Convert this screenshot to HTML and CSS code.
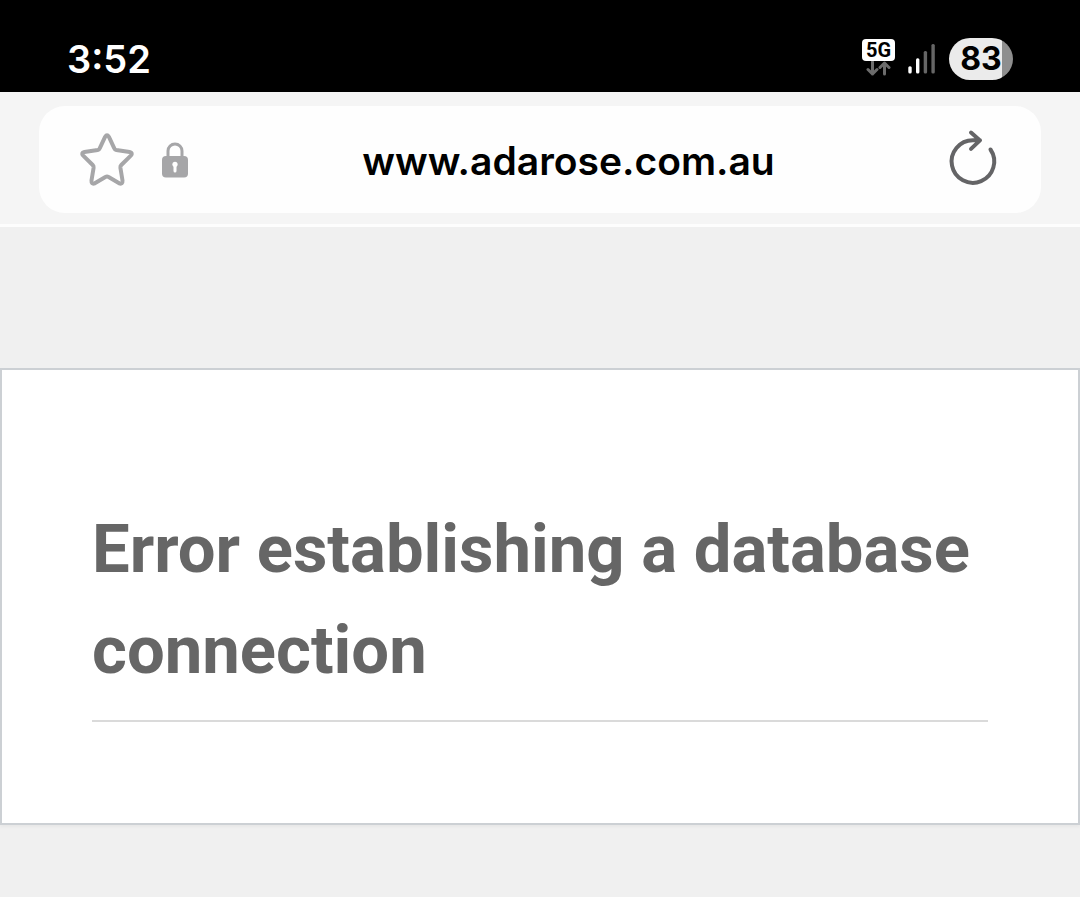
FILE: index.html
```html
<!DOCTYPE html>
<html lang="en">
<head>
    <meta charset="UTF-8">
    <meta name="viewport" content="width=device-width, initial-scale=1.0">
    <title>Database Error</title>
    <link rel="stylesheet" href="styles.css">
</head>
<body>
    <div class="status-bar">
        <span class="clock">3:52</span>
        <div class="status-icons">
            <div class="network">
                <span class="network-type">5G</span>
                <svg width="26" height="18" viewBox="1 0 26 18" aria-hidden="true">
                    <path d="M7.500 1v12M3 8.500l4.500 4.500 4.500-4.500M19.500 13V2M15 6.500l4.500-4.500 4.500 4.500"/>
                </svg>
            </div>
            <svg class="signal" width="28" height="30" viewBox="0 0 28 30" aria-hidden="true">
                <g fill="#fff">
                    <rect x="0.300" y="22.300" width="3.400" height="7.300" rx="1.500"/>
                    <rect x="8" y="14.300" width="3.400" height="15.300" rx="1.500"/>
                </g>
                <g fill="#666">
                    <rect x="15.700" y="7" width="3.400" height="22.600" rx="1.500"/>
                    <rect x="23.400" y="0" width="3.400" height="29.600" rx="1.500"/>
                </g>
            </svg>
            <span class="battery">83</span>
        </div>
    </div>

    <header class="toolbar">
        <div class="address-bar">
            <button class="icon-button" aria-label="Add bookmark">
                <svg width="54" height="54" viewBox="0 0 54 54">
                    <path class="star" d="M25.200 3.700Q27 .7 28.800 3.700L34.300 15.300Q34.800 16.700 36.300 17L49.600 19Q53.300 19.800 50.800 22.600L41.300 32Q40.200 33.100 40.400 34.700L42.500 47.500Q42.800 51.700 39.200 50.300L28.600 44Q27 43.200 25.400 44L14.800 50.300Q11.200 51.700 11.500 47.500L13.600 34.700Q13.800 33.100 12.700 32L3.200 22.600Q.7 19.800 4.400 19L17.700 17Q19.200 16.700 19.700 15.300Z"/>
                </svg>
            </button>
            <button class="icon-button" aria-label="Site information">
                <svg width="26" height="36" viewBox="0 0 26 36">
                    <path class="shackle" d="M6 15V9a7 7 0 0 1 14 0v6"/>
                    <rect x="0" y="14" width="26" height="21.500" rx="4" fill="#a6a6a8"/>
                    <circle cx="13" cy="22.300" r="2.600" fill="#fff"/>
                    <path class="keyhole" d="M13 22v7"/>
                </svg>
            </button>
            <input class="url" type="text" value="www.adarose.com.au" aria-label="Address" spellcheck="false">
            <button class="icon-button" aria-label="Reload">
                <svg width="48" height="56" viewBox="0 3 48 56">
                    <path class="reload" d="M41.500 20.500A21.300 21.300 0 1 1 24 11.200H31M22 3.500l9 7.900-9 8.500"/>
                </svg>
            </button>
        </div>
    </header>

    <main class="error-page">
        <h1>Error establishing a database connection</h1>
    </main>
</body>
</html>
```
FILE: styles.css
```css
* {
    box-sizing: border-box;
}
body {
    margin: 0;
    background-color: #f0f0f0;
    font-family: Inter, "Liberation Sans", sans-serif;
}
.status-bar {
    display: flex;
    align-items: center;
    justify-content: space-between;
    height: 92px;
    padding: 26px 67px 0;
    background-color: #000;
    color: #fff;
}
.clock {
    font-size: 38px;
    font-weight: 600;
}
.status-icons {
    display: flex;
    align-items: center;
    gap: 13px;
}
.network {
    display: flex;
    flex-direction: column;
    align-items: center;
}
.network-type {
    width: 33px;
    border-radius: 4px;
    background-color: #fff;
    color: #000;
    font-family: Roboto, sans-serif;
    font-size: 20px;
    font-weight: 700;
    line-height: 22px;
    text-align: center;
}
.network svg {
    fill: none;
    stroke: #6c6c6c;
    stroke-width: 3;
    stroke-linecap: round;
    stroke-linejoin: round;
}
.battery {
    width: 64px;
    border-radius: 21px;
    background: linear-gradient(to right, #ebebeb 53px, #8e8e8e 53px);
    color: #000;
    font-size: 32px;
    font-weight: 700;
    line-height: 42px;
    text-align: center;
}
.toolbar {
    padding: 14px 39px 11px;
    border-bottom: 3px solid #fdfdfd;
    background-color: #f5f5f5;
}
.address-bar {
    display: flex;
    align-items: center;
    gap: 28px;
    height: 107px;
    padding: 0 44px 0 41px;
    border-radius: 26px;
    background-color: #fefefe;
}
.icon-button {
    display: flex;
    padding: 0;
    border: none;
    background: none;
    cursor: pointer;
}
.icon-button svg {
    overflow: visible;
}
.icon-button path {
    fill: none;
    stroke: #a6a6a8;
    stroke-linecap: round;
    stroke-linejoin: round;
}
.icon-button .star {
    stroke-width: 4;
}
.icon-button .shackle {
    stroke-width: 3;
}
.icon-button .keyhole {
    stroke: #fff;
    stroke-width: 3;
}
.icon-button .reload {
    stroke: #646466;
    stroke-width: 4;
}
.url {
    flex: 1;
    min-width: 0;
    padding: 2px 0 0;
    border: none;
    outline: none;
    background: none;
    color: #000;
    font-family: inherit;
    font-size: 39px;
    font-weight: 600;
    text-align: center;
}
.error-page {
    margin: 141px 0 28px;
    padding: 129px 90px 101px;
    border: 2px solid #ccd0d4;
    background-color: #fff;
    box-shadow: 0 2px 3px rgba(0, 0, 0, 0.04);
}
h1 {
    margin: 0;
    padding-bottom: 19px;
    border-bottom: 2px solid #dadada;
    color: #666;
    font-family: Roboto, sans-serif;
    font-size: 67px;
    font-weight: 700;
    line-height: 101px;
}
```
